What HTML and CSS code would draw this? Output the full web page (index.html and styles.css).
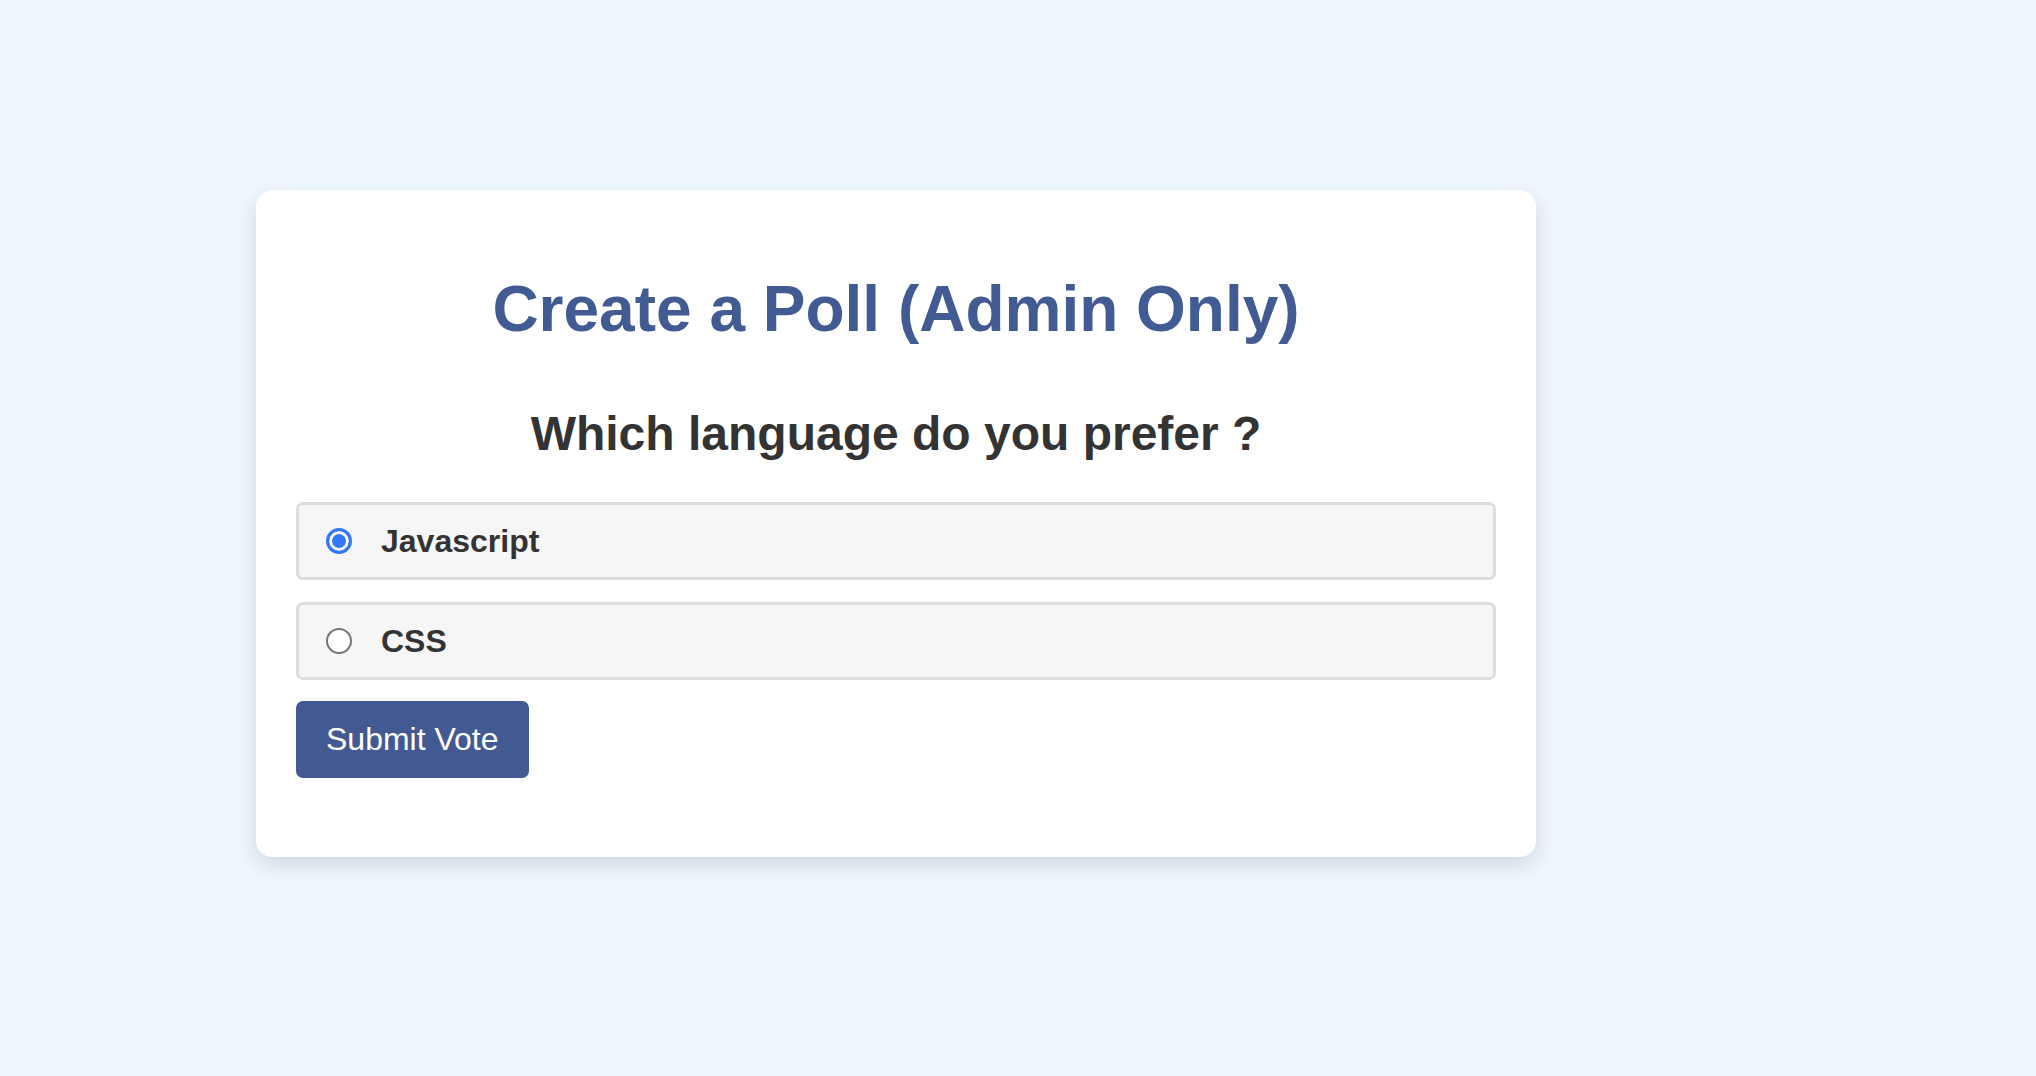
FILE: index.html
```html
<!DOCTYPE html>
<html lang="en">
<head>
<meta charset="utf-8">
<title>Create a Poll</title>
<link rel="stylesheet" href="styles.css">
</head>
<body>
<div class="page">
  <div class="card">
    <h1 class="title">Create a Poll (Admin Only)</h1>
    <h2 class="question">Which language do you prefer ?</h2>
    <form class="poll-form">
      <label class="option">
        <input type="radio" name="lang" class="radio" checked>
        <span class="option-text">Javascript</span>
      </label>
      <label class="option option-last">
        <input type="radio" name="lang" class="radio">
        <span class="option-text">CSS</span>
      </label>
      <button type="button" class="submit">Submit Vote</button>
    </form>
  </div>
</div>
</body>
</html>
```
FILE: styles.css
```css
html, body {
  margin: 0;
  padding: 0;
}
body {
  background: #eff6fd;
  font-family: "Liberation Sans", Arial, sans-serif;
  color: #333;
  min-height: 1076px;
}
.page {
  padding: 190px 0 0 256px;
}
.card {
  box-sizing: border-box;
  width: 1280px;
  background: #fff;
  border-radius: 16px;
  padding: 40px;
  box-shadow: 0 8px 20px rgba(30, 45, 70, 0.15);
}
.title {
  margin: 42px 0 0;
  font-size: 64px;
  line-height: 74px;
  font-weight: 700;
  color: #425b93;
  text-align: center;
}
.question {
  margin: 60px 0 0;
  font-size: 48px;
  line-height: 55px;
  font-weight: 700;
  color: #333;
  text-align: center;
}
.poll-form {
  display: flex;
  flex-direction: column;
  align-items: flex-start;
  margin: 41px 0 39px;
}
.option {
  box-sizing: border-box;
  width: 100%;
  height: 78px;
  display: flex;
  align-items: center;
  padding: 0 27px;
  background: #f6f6f6;
  border: 3px solid #dddddd;
  border-radius: 7px;
  margin-bottom: 22px;
}
.option-last {
  margin-bottom: 21px;
}
.radio {
  -webkit-appearance: none;
  appearance: none;
  box-sizing: border-box;
  width: 26px;
  height: 26px;
  margin: 0 29px 0 0;
  border-radius: 50%;
  border: 2px solid #767676;
  background: #fff;
  flex: none;
}
.radio:checked {
  border: 3px solid #3478f6;
  background: #3478f6;
  box-shadow: inset 0 0 0 3px #fff;
}
.option-text {
  font-size: 32px;
  line-height: 37px;
  font-weight: 700;
  color: #333;
}
.submit {
  font-family: "Liberation Sans", Arial, sans-serif;
  font-size: 32px;
  line-height: 37px;
  color: #fff;
  background: #425a91;
  border: none;
  border-radius: 7px;
  padding: 20px 30px;
  height: 77px;
  margin: 0;
}
```
